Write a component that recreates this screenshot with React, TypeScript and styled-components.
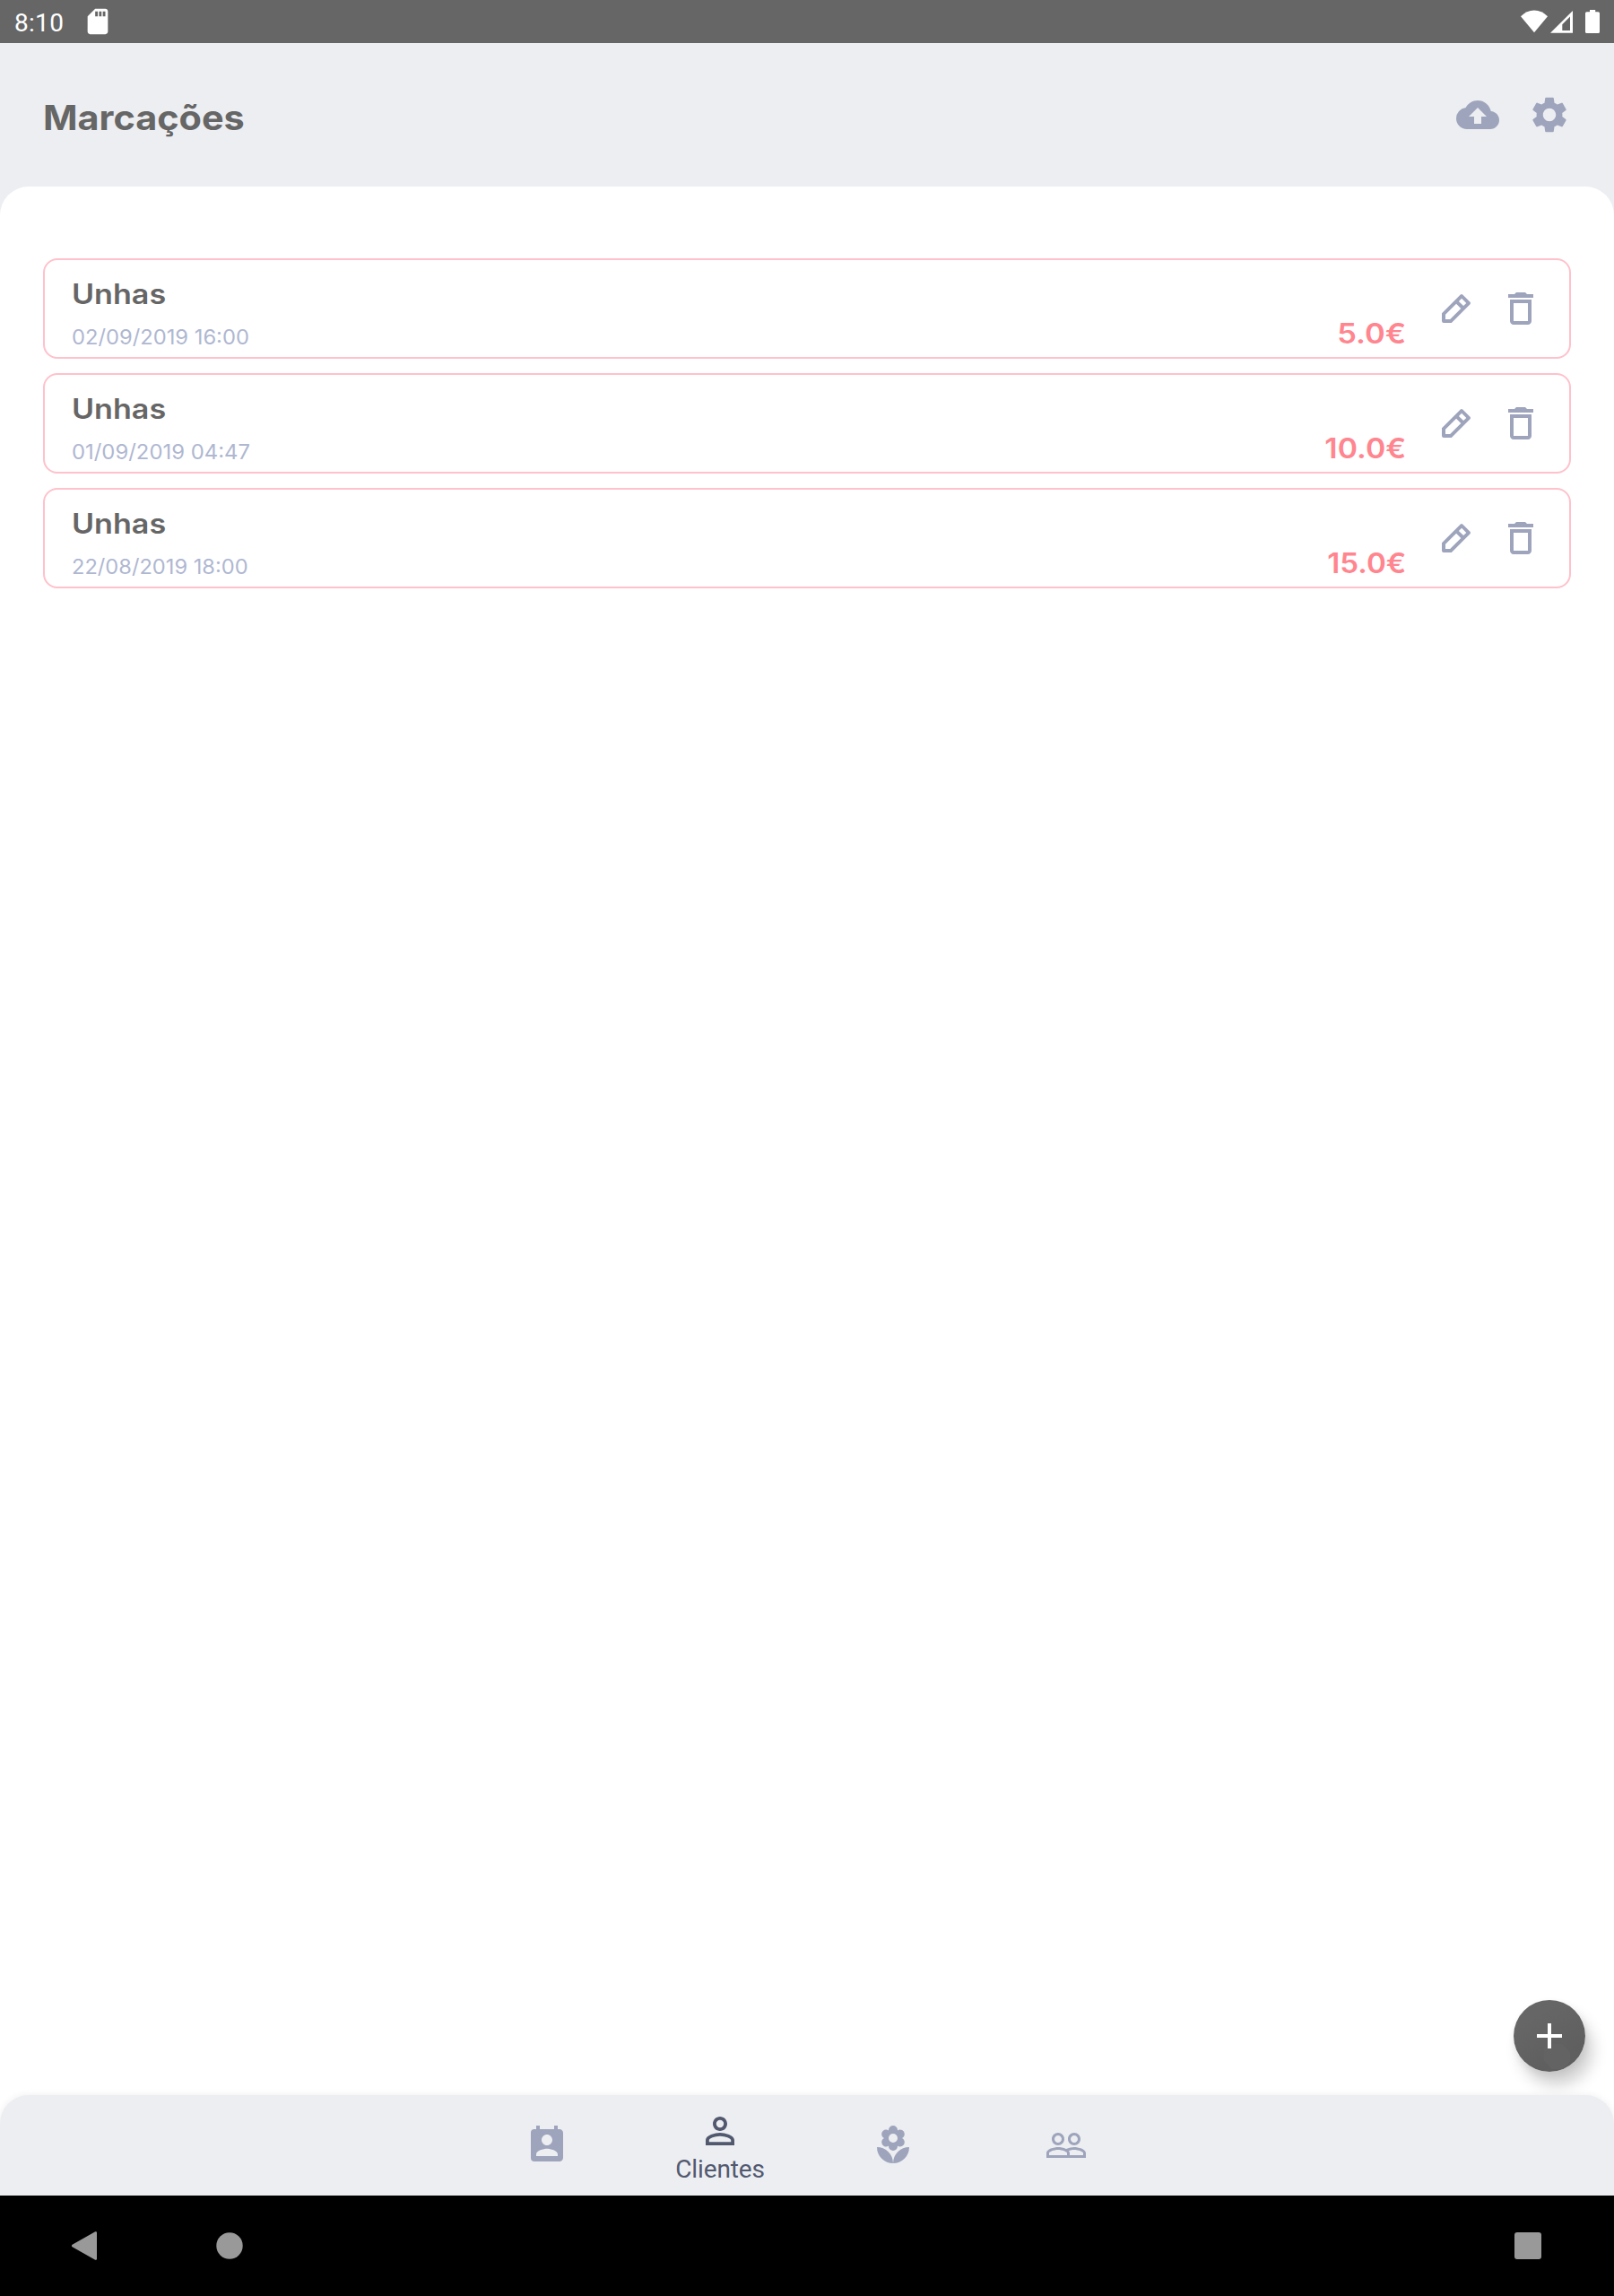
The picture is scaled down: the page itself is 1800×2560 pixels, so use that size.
import React from 'react';
import styled, { createGlobalStyle } from 'styled-components';
import type { IconType } from 'react-icons';
import {
  MdBackup,
  MdDeleteOutline,
  MdLocalFlorist,
  MdPeopleOutline,
  MdPermContactCalendar,
  MdPersonOutline,
  MdSdCard,
  MdSettings,
} from 'react-icons/md';

const colors = {
  gray: '#666666',
  surface: '#edeef2',
  icon: '#9ea4bc',
  iconActive: '#52596f',
  date: '#afb7d1',
  price: '#ff858f',
  outline: '#ffc1cb',
};

const GlobalStyle = createGlobalStyle`
  *, *::before, *::after { box-sizing: border-box; }
  body {
    margin: 0;
    background: #000;
    font-family: Inter, sans-serif;
    -webkit-font-smoothing: antialiased;
  }
  svg { display: block; flex: none; }
`;

const Screen = styled.div`
  display: flex;
  flex-direction: column;
  width: 1800px;
  height: 2560px;
  overflow: hidden;
  background: ${colors.surface};
`;

/* ---------- system status bar ---------- */

const StatusBar = styled.div`
  display: flex;
  justify-content: space-between;
  height: 48px;
  padding: 0 16px;
  background: ${colors.gray};
  color: #fff;
`;

const StatusGroup = styled.div`
  display: flex;
  align-items: center;
`;

const Clock = styled.span`
  width: 76px;
  padding-top: 3px;
  font: 400 28px/32px Roboto, sans-serif;
  letter-spacing: 0.3px;
`;

/* ---------- header ---------- */

const Header = styled.header`
  display: flex;
  align-items: center;
  justify-content: space-between;
  height: 160px;
  padding: 0 48px;
`;

const Title = styled.h1`
  margin: 0;
  padding-top: 6px;
  color: ${colors.gray};
  font-size: 38.5px;
  font-weight: 700;
  line-height: 48px;
  transform: scaleX(1.075);
  transform-origin: left;
`;

const IconButton = styled.button`
  display: flex;
  padding: 0;
  border: 0;
  background: none;
  color: ${colors.icon};
`;

const Actions = styled.div<{ $gap: number }>`
  display: flex;
  align-items: center;
  gap: ${(p) => p.$gap}px;
`;

/* ---------- list ---------- */

const Content = styled.main`
  position: relative;
  flex: 1;
  padding: 80px 48px 0;
  border-radius: 32px 32px 0 0;
  background: #fff;
`;

const List = styled.div`
  display: flex;
  flex-direction: column;
  gap: 16px;
`;

const Card = styled.article`
  display: flex;
  align-items: center;
  height: 112px;
  padding: 0 30px;
  border: 2px solid ${colors.outline};
  border-radius: 16px;
`;

const Info = styled.div`
  display: flex;
  flex: 1;
  flex-direction: column;
  align-items: flex-start;
  gap: 13px;
  align-self: flex-start;
  padding-top: 18px;
`;

const Service = styled.span`
  color: ${colors.gray};
  font-size: 31px;
  font-weight: 600;
  line-height: 40px;
  transform: scaleX(1.1);
  transform-origin: left;
`;

const DateTime = styled.time<{ $stretch: number }>`
  color: ${colors.date};
  font-size: 23px;
  line-height: 30px;
  transform: scaleX(${(p) => p.$stretch});
  transform-origin: left;
`;

const Price = styled.span<{ $stretch: number }>`
  align-self: flex-end;
  margin-right: 32px;
  padding-bottom: 6px;
  color: ${colors.price};
  font-size: 31px;
  font-weight: 600;
  line-height: 40px;
  transform: scaleX(${(p) => p.$stretch});
  transform-origin: right;
`;

const Fab = styled.button`
  position: absolute;
  right: 32px;
  bottom: 138px;
  display: flex;
  align-items: center;
  justify-content: center;
  width: 80px;
  height: 80px;
  padding: 0;
  border: 0;
  border-radius: 50%;
  background: linear-gradient(150deg, #666 25%, #5f5f5f 75%);
  box-shadow: 8px 15px 17px rgba(0, 0, 0, 0.19), 1px 3px 9px rgba(0, 0, 0, 0.07);

  &::before {
    content: '';
    position: absolute;
    left: 34px;
    top: 49px;
    width: 29px;
    height: 28px;
    background: #636363;
    clip-path: polygon(30% 0, 70% 0, 100% 32%, 100% 70%, 72% 100%, 28% 100%, 0 66%, 0 12%);
  }

  svg { position: relative; }
`;

/* ---------- bottom navigation ---------- */

const BottomNav = styled.nav`
  position: relative;
  display: flex;
  justify-content: center;
  height: 112px;
  margin-top: -112px;
  padding-right: 1px;
  border-radius: 32px 32px 0 0;
  background: ${colors.surface};
  box-shadow: 0 0 8px rgba(0, 0, 0, 0.07);
`;

const NavItem = styled.a<{ $active?: boolean }>`
  display: flex;
  flex-direction: column;
  align-items: center;
  justify-content: ${(p) => (p.$active ? 'flex-start' : 'center')};
  gap: 3px;
  width: 193px;
  padding-top: ${(p) => (p.$active ? 16 : 0)}px;
  color: ${(p) => (p.$active ? colors.iconActive : colors.icon)};
  font: 400 28px/32px Roboto, sans-serif;
  letter-spacing: -0.12px;
`;

/* ---------- system navigation ---------- */

const SystemNav = styled.div`
  display: flex;
  align-items: center;
  justify-content: space-between;
  height: 112px;
  padding: 0 72px;
  background: #000;
  color: #999;
`;

const PencilIcon = () => (
  <svg width="48" height="48" viewBox="0 0 24 24" fill="currentColor" fillRule="evenodd">
    <path d="M4 14.6 14.4 4.25a.85.85 0 0 1 1.2 0L19.75 8.4a.85.85 0 0 1 0 1.2L9.4 20H5a1 1 0 0 1-1-1zM6 15.4V18h2.6l6.05-6.05-2.6-2.6zM13.45 7.95l2.6 2.6 1.6-1.6-2.6-2.6z" />
  </svg>
);

const WifiSignalBattery = () => (
  <svg width="88" height="48" viewBox="1696 0 88 48" fill="#fff">
    <path d="M1696 18.2Q1702.5 11.4 1711 11.4T1726 18.2L1711 36.3Z" />
    <path fillRule="evenodd" d="M1729 36.8 1754 12V36.8ZM1742.3 34H1751V18.6L1742.3 27.2Z" />
    <path d="M1773 11h6.2v2.2h3.2a1.6 1.6 0 0 1 1.6 1.6v20.6a1.6 1.6 0 0 1-1.6 1.6h-12.8a1.6 1.6 0 0 1-1.6-1.6V14.8a1.6 1.6 0 0 1 1.6-1.6h3.4z" />
  </svg>
);

const PlusIcon = () => (
  <svg width="28" height="28" viewBox="0 0 28 28" fill="#fff">
    <path d="M12 0h4v12h12v4H16v12h-4V16H0v-4h12z" />
  </svg>
);

const BackIcon = () => (
  <svg width="48" height="48" viewBox="0 0 48 48" fill="currentColor">
    <path d="M34.2 8.3a1.2 1.2 0 0 1 1.8 1v29.4a1.2 1.2 0 0 1-1.8 1L8.6 25.2a1.4 1.4 0 0 1 0-2.4z" />
  </svg>
);

const HomeIcon = () => (
  <svg width="48" height="48" viewBox="0 0 48 48" fill="currentColor">
    <circle cx="24" cy="24" r="14.7" />
  </svg>
);

const RecentsIcon = () => (
  <svg width="48" height="48" viewBox="0 0 48 48" fill="currentColor">
    <rect x="9" y="9" width="30" height="30" rx="3" />
  </svg>
);

interface Appointment {
  service: string;
  date: string;
  dateStretch: number;
  price: string;
  priceStretch: number;
}

const appointments: Appointment[] = [
  { service: 'Unhas', date: '02/09/2019 16:00', dateStretch: 1.032, price: '5.0€', priceStretch: 1.113 },
  { service: 'Unhas', date: '01/09/2019 04:47', dateStretch: 1.038, price: '10.0€', priceStretch: 1.092 },
  { service: 'Unhas', date: '22/08/2019 18:00', dateStretch: 1.028, price: '15.0€', priceStretch: 1.071 },
];

const tabs: { icon: IconType; label?: string }[] = [
  { icon: MdPermContactCalendar },
  { icon: MdPersonOutline, label: 'Clientes' },
  { icon: MdLocalFlorist },
  { icon: MdPeopleOutline },
];

export default function App() {
  return (
    <Screen>
      <GlobalStyle />
      <StatusBar>
        <StatusGroup>
          <Clock>8:10</Clock>
          <MdSdCard size={34} />
        </StatusGroup>
        <StatusGroup>
          <WifiSignalBattery />
        </StatusGroup>
      </StatusBar>

      <Header>
        <Title>Marcações</Title>
        <Actions $gap={32}>
          <IconButton><MdBackup size={48} /></IconButton>
          <IconButton><MdSettings size={48} /></IconButton>
        </Actions>
      </Header>

      <Content>
        <List>
          {appointments.map((a) => (
            <Card key={a.date}>
              <Info>
                <Service>{a.service}</Service>
                <DateTime $stretch={a.dateStretch}>{a.date}</DateTime>
              </Info>
              <Price $stretch={a.priceStretch}>{a.price}</Price>
              <Actions $gap={24}>
                <IconButton><PencilIcon /></IconButton>
                <IconButton><MdDeleteOutline size={48} /></IconButton>
              </Actions>
            </Card>
          ))}
        </List>
        <Fab><PlusIcon /></Fab>
      </Content>

      <BottomNav>
        {tabs.map(({ icon: Icon, label }, i) => (
          <NavItem key={i} $active={Boolean(label)}>
            <Icon size={48} />
            {label}
          </NavItem>
        ))}
      </BottomNav>

      <SystemNav>
        <Actions $gap={112}>
          <BackIcon />
          <HomeIcon />
        </Actions>
        <RecentsIcon />
      </SystemNav>
    </Screen>
  );
}
